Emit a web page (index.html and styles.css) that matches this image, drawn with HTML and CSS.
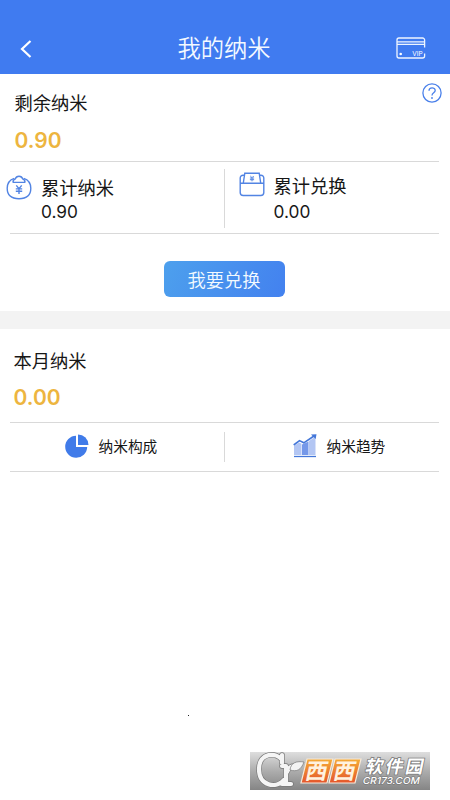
FILE: index.html
```html
<!DOCTYPE html>
<html lang="zh-CN">
<head>
<meta charset="utf-8">
<meta name="viewport" content="width=device-width, initial-scale=1">
<title>我的纳米</title>
<link rel="stylesheet" href="styles.css">
</head>
<body>
<header class="header">
  <svg class="back" width="14" height="20" viewBox="0 0 14 20"><path d="M11.500 2 3 10l8.500 8" fill="none" stroke="#fff" stroke-width="2.200"/></svg>
  <h1 class="title">我的纳米</h1>
  <svg class="card" width="30" height="23" viewBox="0 0 30 23" fill="none" stroke="#eef5ff" stroke-width="1.300">
    <path d="M28.600 10.500V3a2 2 0 0 0-2-2H3a2 2 0 0 0-2 2v16a2 2 0 0 0 2 2h23.600a2 2 0 0 0 2-2v-2.500"/>
    <path d="M1 4.800h27.600M1 7.300h27.600"/>
    <circle cx="4.700" cy="17" r="1.300" fill="#fff" stroke="none"/>
    <text class="vip" x="16.300" y="19.300">VIP</text>
  </svg>
</header>
<main>
  <section class="balance">
    <h2 class="label">剩余纳米</h2>
    <p class="amount">0.90</p>
    <svg class="help" width="20" height="20" viewBox="0 0 20 20" fill="none" stroke="#4a80ea" stroke-width="1.300"><circle cx="10" cy="10" r="9.100"/><path d="M7 7.800c0-4 6.200-3.800 6.200-.3C13.200 9.800 10 9.800 10 12.400"/><circle cx="10" cy="15" r=".9" fill="#4a80ea" stroke="none"/></svg>
  </section>
  <div class="totals">
    <div class="total">
      <svg class="total-icon" width="26" height="26" viewBox="0 0 26 26" fill="none" stroke="#5284e3" stroke-width="1.400">
        <path d="M8.300 3.300C3.900 4.700 1.200 8.600 1.200 13.300c0 6.800 4.500 10.400 11.800 10.400s11.800-3.600 11.800-10.400c0-4.700-2.700-8.600-7.100-10"/>
        <path d="M7.200 7.400h11.600c.5-1.500-.4-2.600-1.800-3.200C16.200 2.200 15 1.200 13 1.200S9.800 2.200 9 4.200C7.600 4.800 6.700 5.900 7.200 7.400Z"/>
        <path d="m10.300 10.400 2.700 3.200 2.700-3.200M9.800 13.900h6.400M9.800 16.300h6.400M13 13.700v5.300"/>
      </svg>
      <div><h3 class="label">累计纳米</h3><p class="value">0.90</p></div>
    </div>
    <div class="total exchange">
      <svg class="total-icon" width="26" height="26" viewBox="0 0 26 26" fill="none" stroke="#5284e3" stroke-width="1.400">
        <path d="M5.500 3.200H4a2.800 2.800 0 0 0-2.800 2.800v14.500a3 3 0 0 0 3 3h17.600a3 3 0 0 0 3-3V6A2.800 2.800 0 0 0 22 3.200h-1.500M1.200 11.300h23.600M4.300 11 5.800 1.200h14.400L21.700 11"/>
        <path d="m11.300 4 1.700 1.700L14.700 4M10.900 6h4.200M10.900 7.700h4.200M13 6v3.300" stroke-width="1"/>
      </svg>
      <div><h3 class="label">累计兑换</h3><p class="value">0.00</p></div>
    </div>
  </div>
  <div class="action"><button class="redeem" type="button">我要兑换</button></div>
  <section class="month">
    <h2 class="label">本月纳米</h2>
    <p class="amount">0.00</p>
  </section>
  <nav class="links">
    <a class="link">
      <svg width="24" height="24" viewBox="0 0 24 24" fill="#407be9"><path d="M11 1.700V13h11.200A11 11 0 1 1 11 1.700Z"/><path d="M13 .5A10.500 10.500 0 0 1 23.500 11H13Z"/></svg>
      <span>纳米构成</span>
    </a>
    <a class="link trend">
      <svg width="24" height="24" viewBox="0 0 24 24"><path d="M1 12 6 8.500l2.500 1.300V21H1Z" fill="#b3c6f3"/><path d="m9 10.500 6.500-3V21H9Z" fill="#7598e9"/><path d="m16 7 6.500-4.500V21H16Z" fill="#b3c6f3"/><path d="M.7 11 6.500 6.600l4.300 2.200L21 2" fill="none" stroke="#4477d9" stroke-width="1.600"/><path d="m18 .5 5.500-.2L22.700 5Z" fill="#4477d9"/><path d="M1 22.500h22" stroke="#4477d9" stroke-width="1.300"/></svg>
      <span>纳米趋势</span>
    </a>
  </nav>
</main>
<i class="speck"></i>
<svg class="watermark" width="180" height="38" viewBox="0 0 180 38">
  <defs>
    <linearGradient id="plate" x2="0" y2="1"><stop stop-color="#dedede"/><stop offset=".5" stop-color="#adadad"/><stop offset="1" stop-color="#858585"/></linearGradient>
    <linearGradient id="orange" x2="0" y2="1"><stop stop-color="#f5ac36"/><stop offset="1" stop-color="#e4552c"/></linearGradient>
  </defs>
  <rect width="180" height="38" fill="url(#plate)"/>
  <g fill="none" stroke-linecap="round" stroke-linejoin="round">
    <path d="M32 3v8M32 8C27 0 9 0 9 17c0 17 17 20 25 11M36 14v17M32 32h9M32 14h4M37 20c2-5 4-6 7-6" stroke="#777" stroke-width="5.500"/>
    <path d="M32 3v8M32 8C27 0 9 0 9 17c0 17 17 20 25 11M36 14v17M32 32h9M32 14h4M37 20c2-5 4-6 7-6" stroke="#f5f5f5" stroke-width="4.200"/>
  </g>
  <path d="M40 18c1-8 7-9 14-8-3 8-7 10-14 8Z" fill="#f3f3f3" stroke="#777" stroke-width=".7"/>
  <path d="M57 7h26l-6 24H51ZM85 7h26l-6 24H79Z" fill="url(#orange)" stroke="#f7ead9" stroke-width="1.200"/>
  <g transform="skewX(-12)">
    <text class="wm-west" x="60" y="27">西</text><text class="wm-west" x="88" y="27">西</text>
    <text class="wm-soft" x="119" y="21.500" textLength="58">软件园</text>
    <text class="wm-site" x="119" y="32" textLength="57" lengthAdjust="spacingAndGlyphs">CR173.COM</text>
  </g>
</svg>
</body>
</html>
```

FILE: styles.css
```css
* { box-sizing: border-box; }
body {
  position: relative;
  margin: 0;
  height: 800px;
  overflow: hidden;
  background: #fff;
  color: #171717;
  font-family: Inter, "Noto Sans CJK SC", sans-serif;
}
h1, h2, h3, p { margin: 0; font-weight: 400; }
svg { display: block; flex: none; }
.header {
  display: grid;
  grid-template-columns: 50px 1fr 50px;
  height: 74px;
  padding: 24px 4px 0 0;
  align-items: center;
  justify-items: center;
  background: #407bf0;
  color: #f4f9ff;
}
.back { margin: -1px 0 0 1px; }
.title { font-size: 23.300px; line-height: 40px; font-weight: 350; margin: -1px 0 0 2px; }
.card { margin: -1px 20px 0 0; justify-self: end; }
.vip { font: 6.500px Inter, sans-serif; fill: #fff; stroke: none; }
.balance { position: relative; height: 88px; padding: 17px 14.500px 0; }
.label { font-size: 18.300px; line-height: 24px; }
.amount { margin-top: 12.500px; color: #edb53f; font-size: 21px; line-height: 26px; font-weight: 600; }
.help { position: absolute; top: 9px; right: 8px; }
.totals {
  display: grid;
  grid-template-columns: 214px 1fr;
  height: 73px;
  margin: -1px 11px 0 10px;
  padding: 7px 0 5px;
  border-top: 1px solid #d9d9d9;
  border-bottom: 1px solid #d9d9d9;
}
.total { display: flex; gap: 9px; margin-left: -4px; padding-top: 7px; }
.exchange { margin: 0; padding: 5px 0 0 13.500px; gap: 9px; border-left: 1px solid #d9d9d9; }
.total-icon { margin-top: -1px; }
.exchange .total-icon { margin-top: -2px; }
.value { font-size: 17.300px; line-height: 24px; }
.exchange .value { margin-top: 2px; }
.action { display: flex; justify-content: center; height: 77px; padding: 27px 2px 0 0; }
.redeem {
  width: 121px;
  height: 36px;
  padding: 0 0 1px;
  border: 0;
  border-radius: 6px;
  background: linear-gradient(115deg, #4da0ed, #4381ef);
  color: #f3faff;
  font: 350 18.300px/34px "Noto Sans CJK SC", sans-serif;
}
.month { height: 111px; padding: 20px 13.500px 0; border-top: 18px solid #f3f3f3; }
.month .amount { margin-top: 12px; }
.links {
  display: grid;
  grid-template-columns: 214px 1fr;
  height: 50px;
  margin: 0 11px 0 10px;
  padding: 9px 0;
  border-top: 1px solid #d9d9d9;
  border-bottom: 1px solid #d9d9d9;
  font-size: 14.700px;
}
.link { display: flex; align-items: center; gap: 9.500px; padding: 0 0 2px 55px; }
.link span { margin-top: -1px; }
.trend { padding-left: 68px; border-left: 1px solid #d9d9d9; }
.speck { position: absolute; left: 188px; top: 715px; width: 1px; height: 1px; background: #222; }
.watermark { position: absolute; left: 250px; top: 752px; overflow: visible; }
.wm-west { font: 700 22px "Noto Sans CJK SC", sans-serif; fill: #fff2df; }
.wm-soft { font: 700 18px "Noto Sans CJK SC", sans-serif; fill: #fff; stroke: #777; stroke-width: 1.500px; paint-order: stroke; }
.wm-site { font: 500 9.500px Inter, sans-serif; fill: #fff; stroke: #777; stroke-width: 1.200px; paint-order: stroke; }
```
